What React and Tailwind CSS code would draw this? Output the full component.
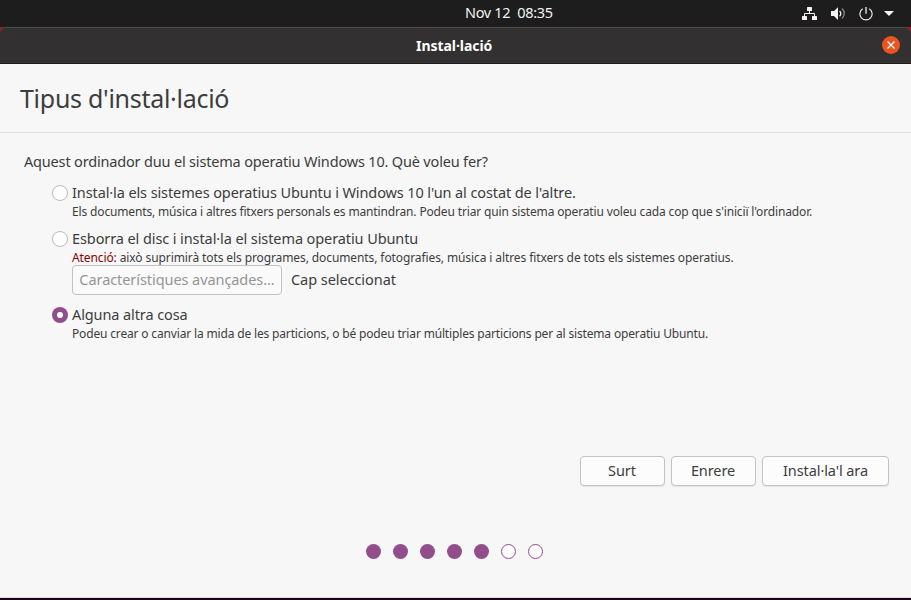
function NetworkIcon() {
  return (
    <svg width="16" height="14" viewBox="0 0 16 14" fill="#f4f4f4">
      <rect x="5" y="0" width="5" height="4" rx="0.6" />
      <rect x="0" y="9" width="5" height="4" rx="0.6" />
      <rect x="10" y="9" width="5" height="4" rx="0.6" />
      <path d="M7.500 4v2.500M2.500 9V6.500h10V9" fill="none" stroke="#f4f4f4" strokeWidth="1" />
    </svg>
  );
}

function VolumeIcon() {
  return (
    <svg width="15" height="14" viewBox="0 0 15 14" fill="none">
      <path d="M0 4h3L7 0.300v12.600L3 9H0z" fill="#f4f4f4" />
      <path d="M8.600 4c1.600 1.400 1.600 3.800 0 5.200" stroke="#f4f4f4" strokeWidth="1.300" />
      <path d="M11 1.600c3 2.800 3 7.200 0 10" stroke="#8a8a8a" strokeWidth="1.300" />
    </svg>
  );
}

function PowerIcon() {
  return (
    <svg width="14" height="14" viewBox="0 0 14 14" fill="none" stroke="#e4e4e4" strokeWidth="1.2">
      <path d="M3.700 1.700a6.100 6.100 0 1 0 6.600 0" />
      <path d="M7 0v6.800" strokeWidth="1.400" />
    </svg>
  );
}

function Radio({ checked }) {
  return checked ? (
    <span className="flex h-4 w-4 shrink-0 items-center justify-center rounded-full bg-[#924d8b]">
      <span className="h-1.5 w-1.5 rounded-full bg-white" />
    </span>
  ) : (
    <span className="h-4 w-4 shrink-0 rounded-full border border-[#b8b8b8] bg-white" />
  );
}

function Option({ checked, label, labelClass, children }) {
  return (
    <div className="flex">
      <div className="flex h-5 w-5 shrink-0 items-center">
        <Radio checked={checked} />
      </div>
      <div>
        <div className={`h-5 text-[14.5px] leading-[18px] ${labelClass}`}>{label}</div>
        {children}
      </div>
    </div>
  );
}

const button =
  "flex h-[30px] items-center justify-center rounded-[4px] border border-[#c3c3c3] bg-[#fcfcfc] text-[14.5px] shadow-[0_1px_1px_rgba(0,0,0,0.08)]";

export default function App() {
  return (
    <div className="flex h-[600px] w-[911px] flex-col overflow-hidden whitespace-pre bg-[#f7f7f7] font-['Noto_Sans',sans-serif] text-[#3d3d3d]">
      <div className="flex h-[27px] shrink-0 items-center bg-[#1d1d1d] text-[#f2f2f2]">
        <div className="w-[465px]" />
        <span className="h-[27px] flex-1 text-[14.5px] leading-[25px] tracking-[-0.32px]">Nov 12  08:35</span>
        <div className="flex h-[26px] items-center pr-[17px]">
          <NetworkIcon />
          <span className="ml-[13px]"><VolumeIcon /></span>
          <span className="ml-[13px]"><PowerIcon /></span>
          <svg className="ml-[11px]" width="10" height="5" viewBox="0 0 10 5" fill="#f4f4f4">
            <path d="M0 0h10L5 5z" />
          </svg>
        </div>
      </div>

      <div className="h-[37px] shrink-0 bg-[linear-gradient(90deg,#a0141e_0_5px,#1d1d1d_5px_906px,#b01424_906px)]">
        <div className="flex h-[37px] items-center rounded-t-[6px] border-t border-b border-t-[#4a4a48] border-b-[#1c1a1a] bg-[#323030] pr-[11px]">
          <div className="w-[416px]" />
          <span className="flex-1 text-[14px] font-bold tracking-[-0.05px] text-white">Instal·lació</span>
          <span className="mb-px flex h-[18px] w-[18px] items-center justify-center rounded-full bg-[#e95420]">
            <svg width="8" height="8" viewBox="0 0 8 8" stroke="#fff" strokeWidth="1.4">
              <path d="M0.500 0.500l7 7M7.500 0.500l-7 7" />
            </svg>
          </span>
        </div>
      </div>

      <header className="flex h-[69px] shrink-0 items-center border-b border-[#dedede] pl-5 pt-0.5 text-[25px] tracking-[-0.28px]">
        <h1>Tipus d'instal·lació</h1>
      </header>

      <main className="flex-1 pl-6 pt-[19px]">
        <p className="h-5 text-[14.5px] leading-[18px] tracking-[-0.175px]">
          Aquest ordinador duu el sistema operatiu Windows 10. Què voleu fer?
        </p>
        <div className="pl-7 pt-[11px]">
          <Option
            label="Instal·la els sistemes operatius Ubuntu i Windows 10 l'un al costat de l'altre."
            labelClass="tracking-[-0.105px]"
          >
            <p className="h-[18px] text-[12px] leading-[18px] tracking-[-0.15px]">
              Els documents, música i altres fitxers personals es mantindran. Podeu triar quin sistema operatiu voleu cada cop que s'iniciï l'ordinador.
            </p>
          </Option>
          <div className="h-2" />
          <Option label="Esborra el disc i instal·la el sistema operatiu Ubuntu" labelClass="tracking-[-0.095px]">
            <p className="h-4 text-[12px] leading-[18px] tracking-[-0.1px]">
              <span className="text-[#8b0000]">Atenció:</span> això suprimirà tots els programes, documents, fotografies, música i altres fitxers de tots els sistemes operatius.
            </p>
            <div className="flex items-center gap-[9px]">
              <button className="flex h-[30px] w-[210px] items-center justify-center rounded-[4px] border border-[#c3c3c3] bg-[#fafafa] text-[14.5px] tracking-[-0.07px] text-[#959595]">
                Característiques avançades...
              </button>
              <span className="text-[14.5px] tracking-[-0.06px]">Cap seleccionat</span>
            </div>
          </Option>
          <div className="h-[10px]" />
          <Option checked label="Alguna altra cosa" labelClass="tracking-[-0.1px]">
            <p className="h-[18px] text-[12px] leading-[18px] tracking-[-0.162px]">
              Podeu crear o canviar la mida de les particions, o bé podeu triar múltiples particions per al sistema operatiu Ubuntu.
            </p>
          </Option>
        </div>
      </main>

      <div className="flex h-[75px] shrink-0 justify-end gap-1.5 pr-[22px]">
        <button className={`${button} w-[85px] pr-px`}>Surt</button>
        <button className={`${button} w-[85px] pr-px tracking-[-0.1px]`}>Enrere</button>
        <button className={`${button} w-[127px] tracking-[-0.08px]`}>Instal·la'l ara</button>
      </div>

      <footer className="flex h-[69px] shrink-0 border-b-2 border-[#20001a]">
        <div className="flex flex-1 gap-3 border-b border-[#dcdcdc] pl-[366px] pt-[13px]">
          {[1, 2, 3, 4, 5].map((n) => (
            <span key={n} className="h-[15px] w-[15px] rounded-full bg-[#924d8b]" />
          ))}
          {[6, 7].map((n) => (
            <span key={n} className="h-[15px] w-[15px] rounded-full border border-[#924d8b] bg-white" />
          ))}
        </div>
      </footer>
    </div>
  );
}
